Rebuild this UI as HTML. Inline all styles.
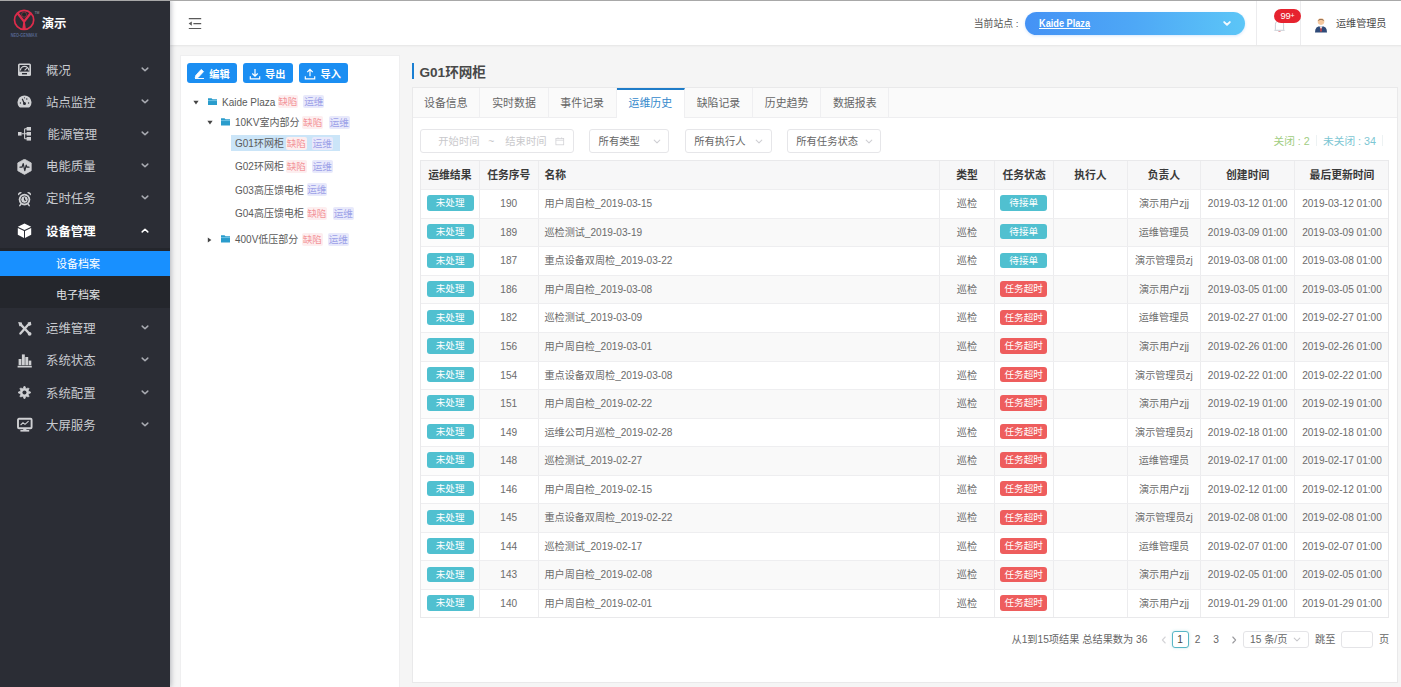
<!DOCTYPE html>
<html lang="zh-CN">
<head>
<meta charset="utf-8">
<title>演示</title>
<style>
*{box-sizing:border-box;margin:0;padding:0}
html,body{width:1401px;height:687px;overflow:hidden}
body{font-family:"Liberation Sans","Noto Sans CJK SC",sans-serif;font-size:12px;color:#555;background:#f5f5f5;position:relative}
.abs{position:absolute}
#side{position:absolute;left:0;top:0;width:169.8px;height:687px;background:#2b2d35;box-shadow:1px 0 5px rgba(0,10,30,.28);z-index:3}
#side .t{position:absolute;left:41.7px;top:13.9px;font-size:12.4px;font-weight:bold;color:#fff;line-height:20px}
.mi{position:absolute;left:0;width:169px;height:32px;line-height:32px;font-size:12.4px;color:#c8cacf}
.mi svg{position:absolute;left:17px;top:8px}
.mi .tx{position:absolute;left:46.4px;top:.7px;white-space:nowrap}
.mi .ar{position:absolute;left:140px;top:12px}
.mi.on{color:#fff;font-weight:bold}
#subbg{position:absolute;left:0;top:248px;width:169.8px;height:60px;background:#24262c}
.sub{position:absolute;left:0;width:169.8px;height:25px;line-height:25px;font-size:11px;color:#e2e3e6}
.sub .tx{position:absolute;left:56px;top:.6px;white-space:nowrap}
.sub.on{background:#1890ff;color:#fff}
#head{position:absolute;left:169.8px;top:1px;width:1232px;height:43.8px;background:#fff;box-shadow:0 1px 2px rgba(0,0,0,.07)}
#topline{position:absolute;left:0;top:0;width:1401px;height:1px;background:#a8a8a8;z-index:5}
#tree{position:absolute;left:180.3px;top:55.2px;width:219.3px;height:640px;background:#fff;border:1px solid #efeff0}
.btn{position:absolute;top:63.3px;height:20.2px;width:49.5px;background:#1b8ef2;border-radius:3px;color:#fff;font-size:10.2px;font-weight:bold;line-height:20px}
.btn span{position:absolute;left:22px;top:1.6px;white-space:nowrap}
.btn svg{position:absolute;left:7px;top:5px}
.tn{position:absolute;height:16px;line-height:17.4px;font-size:10px;color:#5a5a5a;white-space:nowrap}
.tn.hl{background:#cde6f7}
.tg{position:absolute;top:1.5px;height:13px;line-height:14px;font-size:9.6px;padding:0 .5px;border-radius:2px;white-space:nowrap}
.tg.r{color:#f3959a;background:#fdeeef}
.tg.b{color:#9da1e8;background:#e8e9fb}
.fd{position:absolute}
#title{position:absolute;left:411.7px;top:63px;height:15.6px;border-left:2.3px solid #1a7fd2;padding-left:5.8px;font-size:13.6px;font-weight:bold;color:#484848;line-height:19px;white-space:nowrap}
#box{position:absolute;left:412.2px;top:87.2px;width:985.4px;height:595.6px;background:#fff;border:1px solid #e9e9ea}
#tabs{position:absolute;left:0;top:0;width:983.4px;height:29.5px;background:#fafafa;border-bottom:1px solid #eeeef0}
.tab{position:absolute;top:0;height:29.5px;border-right:1px solid #efeff1;text-align:center;line-height:31px;font-size:10.9px;color:#666;white-space:nowrap}
.tab.on{background:#fff;color:#3489cc;border-top:2px solid #1f7cc8;line-height:26.6px;height:30px}
.inp{position:absolute;top:129.3px;height:24px;border:1px solid #e6e6e9;border-radius:3px;background:#fff;font-size:10.3px;line-height:22px;color:#666;white-space:nowrap}
.inp span{position:absolute;top:.5px}
.ph{color:#c9c9cc}
#tb{position:absolute;left:420px;top:159.8px;width:969px;height:458.4px;background:#fff;border:1px solid #e9e9eb}
.vl{position:absolute;top:0;width:1px;height:456.4px;background:#ececee}
.hl{position:absolute;left:0;width:967px;height:1px;background:#eeeef0}
#thbg{position:absolute;left:0;top:0;width:967px;height:28.4px;background:#f7f7f8}
.th{position:absolute;top:.6px;height:28.4px;line-height:28.4px;font-size:10.8px;font-weight:bold;color:#3a3a3a;text-align:center;white-space:nowrap}
.td{position:absolute;height:28.56px;line-height:28.56px;font-size:10.1px;color:#6c6c6c;text-align:center;white-space:nowrap}
.l{text-align:left;padding-left:5.6px}
.bd{position:absolute;height:15.5px;line-height:15.5px;border-radius:3px;color:#fff;font-size:9.6px;text-align:center;white-space:nowrap}
.bd.c{background:#50c0d0}
.bd.r{background:#ee5d5d}
#pg span{position:absolute;top:630.9px;height:18px;line-height:18px;font-size:10.2px;color:#666;white-space:nowrap}
</style>
</head>
<body>
<div id="side">
<svg class="abs" style="left:8px;top:6px" width="34" height="34" viewBox="0 0 34 34">
<circle cx="16.1" cy="13.9" r="9.6" fill="none" stroke="#dd2c4b" stroke-width="1.7"/>
<path d="M9.6 7.2 L16.1 15.6 L22.6 7.2" fill="none" stroke="#dd2c4b" stroke-width="2.3" stroke-linejoin="round"/>
<circle cx="16.1" cy="8.6" r="2.5" fill="#1d2a2a" stroke="#dd2c4b" stroke-width=".5"/>
<path d="M14.3 23 L15.5 14.6 H16.7 L17.9 23Z" fill="#dd2c4b"/>
<text x="26.4" y="7.6" font-size="3.4" fill="#9a9ca3">TM</text>
<text x="2.8" y="30.8" font-size="4.6" font-weight="bold" fill="#55658f" textLength="26.4" lengthAdjust="spacingAndGlyphs">NEO-GENMAX</text>
</svg>
<div class="t">演示</div>
<div class="mi" style="top:54px"><svg width="16" height="16" viewBox="0 0 16 16"><rect x="1" y="1.5" width="13" height="12.5" rx="1.5" fill="#cfd0d3"/><rect x="2.6" y="3" width="9.8" height="6.6" fill="#2b2d35"/><path d="M3.4 8.6 A4.2 4.2 0 0 1 11.8 8.6" fill="none" stroke="#cfd0d3" stroke-width="1.3"/><path d="M7.6 8.4 L10.4 5.6" stroke="#cfd0d3" stroke-width="1.1"/><rect x="5" y="11" width="5" height="1.4" fill="#2b2d35"/></svg><span class="tx" style="left:46px">概况</span><svg class="abs" style="left:140.5px;top:11.6px" width="8" height="7" viewBox="0 0 8 7"><path d="M1.2 2.1 L4 4.8 L6.8 2.1" fill="none" stroke="#a9abb2" stroke-width="1.5" stroke-linecap="round" stroke-linejoin="round"/></svg></div>
<div class="mi" style="top:86.2px"><svg width="16" height="16" viewBox="0 0 16 16"><path d="M2.2 13 A7 7 0 1 1 12.8 13 Q12.4 13.4 11.8 13.4 H3.2 Q2.6 13.4 2.2 13Z" fill="#cfd0d3"/><circle cx="7.5" cy="9.6" r="1.5" fill="#2b2d35"/><path d="M7.3 9.4 L5.4 5.2" stroke="#2b2d35" stroke-width="1.2" stroke-linecap="round"/><circle cx="3.4" cy="9" r=".7" fill="#2b2d35"/><circle cx="11.6" cy="9" r=".7" fill="#2b2d35"/><circle cx="9.8" cy="5" r=".7" fill="#2b2d35"/><circle cx="7.5" cy="3.8" r=".6" fill="#2b2d35"/></svg><span class="tx" style="left:46px">站点监控</span><svg class="abs" style="left:140.5px;top:11.6px" width="8" height="7" viewBox="0 0 8 7"><path d="M1.2 2.1 L4 4.8 L6.8 2.1" fill="none" stroke="#a9abb2" stroke-width="1.5" stroke-linecap="round" stroke-linejoin="round"/></svg></div>
<div class="mi" style="top:118.4px"><svg width="16" height="16" viewBox="0 0 16 16"><rect x="1" y="6" width="3.6" height="3.6" fill="#cfd0d3"/><path d="M4.6 7.8 H7.6 M7.6 2.8 V12.8 M7.6 2.8 H10 M7.6 7.8 H10 M7.6 12.8 H10" stroke="#cfd0d3" stroke-width="1.1" fill="none"/><rect x="9.6" y="1" width="4.4" height="3.6" fill="#cfd0d3"/><rect x="9.6" y="6" width="4.4" height="3.6" fill="#cfd0d3"/><rect x="9.6" y="11" width="4.4" height="3.6" fill="#cfd0d3"/></svg><span class="tx" style="left:47.5px">能源管理</span><svg class="abs" style="left:140.5px;top:11.6px" width="8" height="7" viewBox="0 0 8 7"><path d="M1.2 2.1 L4 4.8 L6.8 2.1" fill="none" stroke="#a9abb2" stroke-width="1.5" stroke-linecap="round" stroke-linejoin="round"/></svg></div>
<div class="mi" style="top:150.6px"><svg width="16" height="16" viewBox="0 0 16 16"><path d="M7.5 .2 L14.2 3.9 V11.7 L7.5 15.4 L.8 11.7 V3.9Z" fill="#cfd0d3" stroke="#cfd0d3" stroke-width=".8" stroke-linejoin="round"/><path d="M3 8.2 H5 L6.2 4.6 L7.8 11.6 L9.2 6.2 L10 8.2 H12" fill="none" stroke="#2b2d35" stroke-width="1.2" stroke-linejoin="round" stroke-linecap="round"/></svg><span class="tx" style="left:46px">电能质量</span><svg class="abs" style="left:140.5px;top:11.6px" width="8" height="7" viewBox="0 0 8 7"><path d="M1.2 2.1 L4 4.8 L6.8 2.1" fill="none" stroke="#a9abb2" stroke-width="1.5" stroke-linecap="round" stroke-linejoin="round"/></svg></div>
<div class="mi" style="top:182.8px"><svg width="16" height="16" viewBox="0 0 16 16"><circle cx="7.5" cy="8.6" r="5.8" fill="#cfd0d3"/><circle cx="7.5" cy="8.6" r="3.7" fill="none" stroke="#2b2d35" stroke-width=".8"/><path d="M7.5 6.6 V8.8 L9 9.6" stroke="#2b2d35" stroke-width="1.1" fill="none"/><path d="M1 4.4 A2.6 2.6 0 0 1 5 1.6Z" fill="#cfd0d3"/><path d="M14 4.4 A2.6 2.6 0 0 0 10 1.6Z" fill="#cfd0d3"/><path d="M3.8 13.2 L2.8 14.6 M11.2 13.2 L12.2 14.6" stroke="#cfd0d3" stroke-width="1.5" stroke-linecap="round"/></svg><span class="tx" style="left:46px">定时任务</span><svg class="abs" style="left:140.5px;top:11.6px" width="8" height="7" viewBox="0 0 8 7"><path d="M1.2 2.1 L4 4.8 L6.8 2.1" fill="none" stroke="#a9abb2" stroke-width="1.5" stroke-linecap="round" stroke-linejoin="round"/></svg></div>
<div class="mi on" style="top:215px"><svg width="16" height="16" viewBox="0 0 16 16"><path d="M7.5 .6 L14.2 3.8 L7.5 7 L.8 3.8Z" fill="#fff"/><path d="M.8 5 L7 8 V15 L.8 11.8Z" fill="#fff"/><path d="M14.2 5 L8 8 V15 L14.2 11.8Z" fill="#fff"/></svg><span class="tx" style="left:46px">设备管理</span><svg class="abs" style="left:140.5px;top:11.6px" width="8" height="7" viewBox="0 0 8 7"><path d="M1.2 4.9 L4 2.2 L6.8 4.9" fill="none" stroke="#fff" stroke-width="1.5" stroke-linecap="round" stroke-linejoin="round"/></svg></div>
<div id="subbg"></div>
<div class="sub on" style="top:251.3px"><span class="tx">设备档案</span></div>
<div class="sub" style="top:282.3px"><span class="tx">电子档案</span></div>
<div class="mi" style="top:312.6px"><svg width="16" height="16" viewBox="0 0 16 16"><path d="M3.6 3.4 L12.4 12.6" stroke="#cfd0d3" stroke-width="2.3" stroke-linecap="round"/><path d="M11.6 3.2 L3.4 12.6" stroke="#cfd0d3" stroke-width="2.3" stroke-linecap="round"/><path d="M1.2 1 L4.8 1.6 L5.4 5 L2.4 5.2Z" fill="#cfd0d3"/><path d="M10.6 1.4 L13.8 .8 L14.4 4 L12 5Z" fill="#cfd0d3"/><circle cx="12.6" cy="12.8" r="1.9" fill="#cfd0d3"/></svg><span class="tx" style="left:46px">运维管理</span><svg class="abs" style="left:140.5px;top:11.6px" width="8" height="7" viewBox="0 0 8 7"><path d="M1.2 2.1 L4 4.8 L6.8 2.1" fill="none" stroke="#a9abb2" stroke-width="1.5" stroke-linecap="round" stroke-linejoin="round"/></svg></div>
<div class="mi" style="top:344.8px"><svg width="16" height="16" viewBox="0 0 16 16"><rect x=".6" y="12.8" width="14.2" height="1.7" fill="#cfd0d3"/><rect x="1.6" y="6" width="2.8" height="6.2" fill="#cfd0d3"/><rect x="4.9" y="1.4" width="2.9" height="10.8" fill="#cfd0d3"/><rect x="8.3" y="4" width="2.9" height="8.2" fill="#cfd0d3"/><rect x="11.7" y="7.6" width="2.6" height="4.6" fill="#cfd0d3"/></svg><span class="tx" style="left:46px">系统状态</span><svg class="abs" style="left:140.5px;top:11.6px" width="8" height="7" viewBox="0 0 8 7"><path d="M1.2 2.1 L4 4.8 L6.8 2.1" fill="none" stroke="#a9abb2" stroke-width="1.5" stroke-linecap="round" stroke-linejoin="round"/></svg></div>
<div class="mi" style="top:377px"><svg width="16" height="16" viewBox="0 0 16 16"><g transform="translate(1.1,1.1) scale(.85)"><path d="M7.5 1 L8.7 1 L9.2 2.9 L10.7 3.6 L12.4 2.6 L13.4 3.6 L12.4 5.3 L13 6.8 L15 7.3 L15 8.7 L13 9.2 L12.4 10.7 L13.4 12.4 L12.4 13.4 L10.7 12.4 L9.2 13.1 L8.7 15 L7.3 15 L6.8 13.1 L5.3 12.4 L3.6 13.4 L2.6 12.4 L3.6 10.7 L3 9.2 L1 8.7 L1 7.3 L3 6.8 L3.6 5.3 L2.6 3.6 L3.6 2.6 L5.3 3.6 L6.8 2.9 L7.3 1Z" fill="#cfd0d3" stroke="#cfd0d3" stroke-width=".9" stroke-linejoin="round" transform="translate(-.5,-.5)"/><circle cx="7.5" cy="7.5" r="2.4" fill="#2b2d35"/></g></svg><span class="tx" style="left:46px">系统配置</span><svg class="abs" style="left:140.5px;top:11.6px" width="8" height="7" viewBox="0 0 8 7"><path d="M1.2 2.1 L4 4.8 L6.8 2.1" fill="none" stroke="#a9abb2" stroke-width="1.5" stroke-linecap="round" stroke-linejoin="round"/></svg></div>
<div class="mi" style="top:409.2px"><svg width="16" height="16" viewBox="0 0 16 16"><rect x="1" y="1.8" width="13.6" height="9.4" rx="1" fill="none" stroke="#cfd0d3" stroke-width="1.9"/><path d="M3.6 8 L6 5.8 L8 7.4 L11.6 4.2" fill="none" stroke="#cfd0d3" stroke-width="1.1"/><rect x="6.2" y="11.6" width="3.2" height="1.6" fill="#cfd0d3"/><rect x="3.4" y="13" width="8.8" height="1.6" fill="#cfd0d3"/></svg><span class="tx" style="left:46px">大屏服务</span><svg class="abs" style="left:140.5px;top:11.6px" width="8" height="7" viewBox="0 0 8 7"><path d="M1.2 2.1 L4 4.8 L6.8 2.1" fill="none" stroke="#a9abb2" stroke-width="1.5" stroke-linecap="round" stroke-linejoin="round"/></svg></div>
</div>
<div id="head"></div>
<div id="topline"></div>
<svg class="abs" style="left:188px;top:17px" width="14" height="13" viewBox="0 0 14 13"><path d="M.8 1.6 H13.2 M5.4 6.6 H13.2 M.8 11.5 H13.2" stroke="#5a5a5a" stroke-width="1.2" fill="none"/><path d="M.6 6.6 L3.8 4.4 V8.8Z" fill="#5a5a5a"/></svg>
<div class="abs" style="left:973.8px;top:14.7px;height:18px;line-height:18px;font-size:9.8px;color:#555;white-space:nowrap">当前站点 :</div>
<div class="abs" style="left:1025px;top:12px;width:220px;height:23px;border-radius:11.5px;background:linear-gradient(90deg,#4492f5 0%,#4ea8f6 50%,#5cc6f7 100%);box-shadow:0 1px 3px rgba(60,140,240,.22)"></div>
<div class="abs" style="left:1039.2px;top:14.2px;height:18px;line-height:18px;font-weight:bold;font-size:11px;color:#fff;text-decoration:underline;white-space:nowrap;transform-origin:0 50%;transform:scaleX(.835)">Kaide Plaza</div>
<svg class="abs" style="left:1222.6px;top:19.6px" width="8" height="7" viewBox="0 0 8 7"><path d="M1.2 2.1 L4 4.8 L6.8 2.1" fill="none" stroke="#f2faff" stroke-width="1.9" stroke-linecap="round" stroke-linejoin="round"/></svg>
<div class="abs" style="left:1256px;top:1px;width:1px;height:44px;background:#ececee"></div>
<div class="abs" style="left:1300px;top:1px;width:1px;height:44px;background:#ececee"></div>
<svg class="abs" style="left:1272.6px;top:19.4px" width="13" height="14" viewBox="0 0 13 14"><path d="M2.4 10.4 V5.8 A4.1 4.1 0 0 1 10.6 5.8 V10.4 L11.4 11.3 H1.6Z" fill="none" stroke="#c3c9d1" stroke-width=".9"/><path d="M5.4 12.5 H7.6" stroke="#e6a3a8" stroke-width="1"/></svg>
<div class="abs" style="left:1274px;top:8.9px;width:26.7px;height:14.4px;border-radius:7.2px;background:#e6232f;color:#fff;font-size:9.4px;line-height:14.6px;text-align:center;letter-spacing:-.2px">99<span style="font-size:7px;position:relative;top:-.5px">+</span></div>
<svg class="abs" style="left:1314px;top:17px" width="14" height="16" viewBox="0 0 14 16"><circle cx="7" cy="4.6" r="3.3" fill="#f6c9a0"/><path d="M3.6 3.8 Q7 .2 10.4 3.8 Q8.6 3.4 7 2.6 Q5.4 3.4 3.6 3.8Z" fill="#5a3a22"/><path d="M1 15.4 Q1 9 7 9 Q13 9 13 15.4Z" fill="#2f4a78"/><path d="M5.4 9.2 L7 12.4 L8.6 9.2Z" fill="#fff"/><path d="M6.6 10.4 H7.4 L7.8 14 L7 15 L6.2 14Z" fill="#e04040"/></svg>
<div class="abs" style="left:1336px;top:14.5px;height:18px;line-height:18px;font-size:10.1px;color:#4a4a4a;white-space:nowrap">运维管理员</div>
<div id="tree"></div>
<div class="btn" style="left:187.3px"><svg width="11" height="11" viewBox="0 0 11 11"><path d="M1.8 7.4 L7.2 1.4 L9.6 3.6 L4.2 9.4 L1.2 10Z" fill="#fff" stroke="#fff" stroke-width=".8" stroke-linejoin="round"/><path d="M1 10.6 H10" stroke="#fff" stroke-width="1.1"/></svg><span>编辑</span></div>
<div class="btn" style="left:243px"><svg style="left:5.8px;top:4.6px" width="12" height="12" viewBox="0 0 11 11"><path d="M5.5 1 V7.2 M3 5 L5.5 7.4 L8 5 M1.2 7.6 V10 H9.8 V7.6" fill="none" stroke="#fff" stroke-width="1.1"/></svg><span>导出</span></div>
<div class="btn" style="left:298.6px"><svg style="left:5.8px;top:4.6px" width="12" height="12" viewBox="0 0 11 11"><path d="M5.5 7.6 V1.4 M3 3.8 L5.5 1.2 L8 3.8 M1.2 7.6 V10 H9.8 V7.6" fill="none" stroke="#fff" stroke-width="1.1"/></svg><span>导入</span></div>
<svg class="abs" style="left:193px;top:99.5px" width="6" height="5" viewBox="0 0 6 5"><path d="M.4 .8 H5.6 L3 4.4Z" fill="#444"/></svg>
<svg class="fd" style="left:207.8px;top:97.6px" width="9.4" height="7.6" viewBox="0 0 10 8"><path d="M0 .3 H3.8 L4.8 1.3 H10 V8 H0Z" fill="#2a9ccc"/><path d="M0 2.7 H10" stroke="#8fd6f2" stroke-width=".7"/></svg>
<div class="tn" style="left:222px;top:93.6px">Kaide Plaza</div><div class="tg r" style="left:277.5px;top:95.1px;width:20.5px;text-align:center">缺陷</div><div class="tg b" style="left:303.4px;top:95.1px;width:20.8px;text-align:center">运维</div>
<svg class="abs" style="left:206.5px;top:120px" width="6" height="5" viewBox="0 0 6 5"><path d="M.4 .8 H5.6 L3 4.4Z" fill="#444"/></svg>
<svg class="fd" style="left:221px;top:118px" width="9.4" height="7.6" viewBox="0 0 10 8"><path d="M0 .3 H3.8 L4.8 1.3 H10 V8 H0Z" fill="#2a9ccc"/><path d="M0 2.7 H10" stroke="#8fd6f2" stroke-width=".7"/></svg>
<div class="tn" style="left:235px;top:114.2px">10KV室内部分</div><div class="tg r" style="left:302.4px;top:115.7px;width:20.6px;text-align:center">缺陷</div><div class="tg b" style="left:329px;top:115.7px;width:20.5px;text-align:center">运维</div>
<div class="abs" style="left:231px;top:134.8px;width:109px;height:16.7px;background:#cbe5f8"></div><div class="tn" style="left:235px;top:135.2px">G01环网柜</div><div class="tg r" style="left:286px;top:136.7px;width:20.5px;text-align:center">缺陷</div><div class="tg b" style="left:312px;top:136.7px;width:20.5px;text-align:center">运维</div>
<div class="tn" style="left:235px;top:158.1px">G02环网柜</div><div class="tg r" style="left:286px;top:159.6px;width:20.5px;text-align:center">缺陷</div><div class="tg b" style="left:312px;top:159.6px;width:20.5px;text-align:center">运维</div>
<div class="tn" style="left:235px;top:181.5px">G03高压馈电柜</div><div class="tg b" style="left:306.5px;top:183px;width:20.5px;text-align:center">运维</div>
<div class="tn" style="left:235px;top:205px">G04高压馈电柜</div><div class="tg r" style="left:306.5px;top:206.5px;width:20.5px;text-align:center">缺陷</div><div class="tg b" style="left:333px;top:206.5px;width:20.5px;text-align:center">运维</div>
<svg class="abs" style="left:207px;top:236.5px" width="5" height="6" viewBox="0 0 5 6"><path d="M.8 .4 V5.6 L4.4 3Z" fill="#444"/></svg>
<svg class="fd" style="left:221px;top:235px" width="9.4" height="7.6" viewBox="0 0 10 8"><path d="M0 .3 H3.8 L4.8 1.3 H10 V8 H0Z" fill="#2a9ccc"/><path d="M0 2.7 H10" stroke="#8fd6f2" stroke-width=".7"/></svg>
<div class="tn" style="left:235px;top:231.3px">400V低压部分</div><div class="tg r" style="left:302px;top:232.8px;width:20.5px;text-align:center">缺陷</div><div class="tg b" style="left:328px;top:232.8px;width:20.5px;text-align:center">运维</div>
<div id="title">G01环网柜</div>
<div id="box"><div id="tabs">
<div class="tab" style="left:-0.9px;width:68.15px">设备信息</div>
<div class="tab" style="left:67.25px;width:68.15px">实时数据</div>
<div class="tab" style="left:135.4px;width:68.15px">事件记录</div>
<div class="tab on" style="left:203.55px;width:68.15px">运维历史</div>
<div class="tab" style="left:271.7px;width:68.15px">缺陷记录</div>
<div class="tab" style="left:339.85px;width:68.15px">历史趋势</div>
<div class="tab" style="left:408px;width:68.15px">数据报表</div>
</div></div>
<div class="inp" style="left:420.3px;width:153.5px"><span class="ph" style="left:17px">开始时间</span><span class="ph" style="left:67px">~</span><span class="ph" style="left:84px">结束时间</span><svg class="abs" style="left:133.6px;top:6.6px" width="10" height="9" viewBox="0 0 10 9"><rect x=".9" y="1.4" width="7.8" height="6.4" fill="none" stroke="#d2d2d6" stroke-width=".8"/><path d="M.9 3.2 H8.7 M3 .4 V2 M6.6 .4 V2" stroke="#d2d2d6" stroke-width=".8"/></svg></div>
<div class="inp" style="left:589px;width:80.2px"><span style="left:8.6px">所有类型</span><svg class="abs" style="left:62.9px;top:8px" width="8" height="7" viewBox="0 0 8 7"><path d="M1.2 2.1 L4 4.8 L6.8 2.1" fill="none" stroke="#cfcfd3" stroke-width="1.1" stroke-linecap="round" stroke-linejoin="round"/></svg></div>
<div class="inp" style="left:684.6px;width:87px"><span style="left:8.6px">所有执行人</span><svg class="abs" style="left:69.7px;top:8px" width="8" height="7" viewBox="0 0 8 7"><path d="M1.2 2.1 L4 4.8 L6.8 2.1" fill="none" stroke="#cfcfd3" stroke-width="1.1" stroke-linecap="round" stroke-linejoin="round"/></svg></div>
<div class="inp" style="left:786.7px;width:94.7px"><span style="left:8.6px">所有任务状态</span><svg class="abs" style="left:77.4px;top:8px" width="8" height="7" viewBox="0 0 8 7"><path d="M1.2 2.1 L4 4.8 L6.8 2.1" fill="none" stroke="#cfcfd3" stroke-width="1.1" stroke-linecap="round" stroke-linejoin="round"/></svg></div>
<div class="abs" style="left:1273.5px;top:132px;height:18px;line-height:18px;font-size:10.7px;white-space:nowrap;color:#9fcd82">关闭 : 2</div>
<div class="abs" style="left:1316px;top:135px;width:1px;height:11px;background:#edf2f3"></div>
<div class="abs" style="left:1323px;top:132px;height:18px;line-height:18px;font-size:10.7px;white-space:nowrap;color:#7cc6d3">未关闭 : 34</div>
<div class="abs" style="left:1381.5px;top:135px;width:1px;height:11px;background:#edf2f3"></div>
<div id="tb"><div id="thbg"></div>
<div class="abs" style="left:0;top:57.96px;width:57.7px;height:27.56px;background:#fcfcfc"></div>
<div class="abs" style="left:57.7px;top:57.96px;width:909.3px;height:27.56px;background:#f9f9f9"></div>
<div class="abs" style="left:0;top:115.08px;width:57.7px;height:27.56px;background:#fcfcfc"></div>
<div class="abs" style="left:57.7px;top:115.08px;width:909.3px;height:27.56px;background:#f9f9f9"></div>
<div class="abs" style="left:0;top:172.2px;width:57.7px;height:27.56px;background:#fcfcfc"></div>
<div class="abs" style="left:57.7px;top:172.2px;width:909.3px;height:27.56px;background:#f9f9f9"></div>
<div class="abs" style="left:0;top:229.32px;width:57.7px;height:27.56px;background:#fcfcfc"></div>
<div class="abs" style="left:57.7px;top:229.32px;width:909.3px;height:27.56px;background:#f9f9f9"></div>
<div class="abs" style="left:0;top:286.44px;width:57.7px;height:27.56px;background:#fcfcfc"></div>
<div class="abs" style="left:57.7px;top:286.44px;width:909.3px;height:27.56px;background:#f9f9f9"></div>
<div class="abs" style="left:0;top:343.56px;width:57.7px;height:27.56px;background:#fcfcfc"></div>
<div class="abs" style="left:57.7px;top:343.56px;width:909.3px;height:27.56px;background:#f9f9f9"></div>
<div class="abs" style="left:0;top:400.68px;width:57.7px;height:27.56px;background:#fcfcfc"></div>
<div class="abs" style="left:57.7px;top:400.68px;width:909.3px;height:27.56px;background:#f9f9f9"></div>
<div class="vl" style="left:57.7px"></div>
<div class="vl" style="left:116.9px"></div>
<div class="vl" style="left:517.9px"></div>
<div class="vl" style="left:573px"></div>
<div class="vl" style="left:632.2px"></div>
<div class="vl" style="left:705.8px"></div>
<div class="vl" style="left:779.1px"></div>
<div class="vl" style="left:873.2px"></div>
<div class="hl" style="top:28.4px"></div>
<div class="hl" style="top:56.96px"></div>
<div class="hl" style="top:85.52px"></div>
<div class="hl" style="top:114.08px"></div>
<div class="hl" style="top:142.64px"></div>
<div class="hl" style="top:171.2px"></div>
<div class="hl" style="top:199.76px"></div>
<div class="hl" style="top:228.32px"></div>
<div class="hl" style="top:256.88px"></div>
<div class="hl" style="top:285.44px"></div>
<div class="hl" style="top:314px"></div>
<div class="hl" style="top:342.56px"></div>
<div class="hl" style="top:371.12px"></div>
<div class="hl" style="top:399.68px"></div>
<div class="hl" style="top:428.24px"></div>
<div class="th" style="left:0px;width:57.7px">运维结果</div>
<div class="th" style="left:58.7px;width:58.2px">任务序号</div>
<div class="th l" style="left:117.9px;width:400px">名称</div>
<div class="th" style="left:518.9px;width:54.1px">类型</div>
<div class="th" style="left:574px;width:58.2px">任务状态</div>
<div class="th" style="left:633.2px;width:72.6px">执行人</div>
<div class="th" style="left:706.8px;width:72.3px">负责人</div>
<div class="th" style="left:780.1px;width:93.1px">创建时间</div>
<div class="th" style="left:874.2px;width:93.6px">最后更新时间</div>
<div class="bd c" style="left:5.6px;top:34.6px;width:47px">未处理</div>
<div class="td" style="left:58.7px;top:29.4px;width:58.2px">190</div>
<div class="td l" style="left:117.9px;top:29.4px;width:400px">用户周自检_2019-03-15</div>
<div class="td" style="left:518.9px;top:29.4px;width:54.1px">巡检</div>
<div class="bd c" style="left:579.2px;top:34.6px;width:47px">待接单</div>
<div class="td" style="left:706.8px;top:29.4px;width:72.3px">演示用户zjj</div>
<div class="td" style="left:780.1px;top:29.4px;width:93.1px">2019-03-12 01:00</div>
<div class="td" style="left:874.2px;top:29.4px;width:93.6px">2019-03-12 01:00</div>
<div class="bd c" style="left:5.6px;top:63.16px;width:47px">未处理</div>
<div class="td" style="left:58.7px;top:57.96px;width:58.2px">189</div>
<div class="td l" style="left:117.9px;top:57.96px;width:400px">巡检测试_2019-03-19</div>
<div class="td" style="left:518.9px;top:57.96px;width:54.1px">巡检</div>
<div class="bd c" style="left:579.2px;top:63.16px;width:47px">待接单</div>
<div class="td" style="left:706.8px;top:57.96px;width:72.3px">运维管理员</div>
<div class="td" style="left:780.1px;top:57.96px;width:93.1px">2019-03-09 01:00</div>
<div class="td" style="left:874.2px;top:57.96px;width:93.6px">2019-03-09 01:00</div>
<div class="bd c" style="left:5.6px;top:91.72px;width:47px">未处理</div>
<div class="td" style="left:58.7px;top:86.52px;width:58.2px">187</div>
<div class="td l" style="left:117.9px;top:86.52px;width:400px">重点设备双周检_2019-03-22</div>
<div class="td" style="left:518.9px;top:86.52px;width:54.1px">巡检</div>
<div class="bd c" style="left:579.2px;top:91.72px;width:47px">待接单</div>
<div class="td" style="left:706.8px;top:86.52px;width:72.3px">演示管理员zj</div>
<div class="td" style="left:780.1px;top:86.52px;width:93.1px">2019-03-08 01:00</div>
<div class="td" style="left:874.2px;top:86.52px;width:93.6px">2019-03-08 01:00</div>
<div class="bd c" style="left:5.6px;top:120.28px;width:47px">未处理</div>
<div class="td" style="left:58.7px;top:115.08px;width:58.2px">186</div>
<div class="td l" style="left:117.9px;top:115.08px;width:400px">用户周自检_2019-03-08</div>
<div class="td" style="left:518.9px;top:115.08px;width:54.1px">巡检</div>
<div class="bd r" style="left:579.2px;top:120.28px;width:47px">任务超时</div>
<div class="td" style="left:706.8px;top:115.08px;width:72.3px">演示用户zjj</div>
<div class="td" style="left:780.1px;top:115.08px;width:93.1px">2019-03-05 01:00</div>
<div class="td" style="left:874.2px;top:115.08px;width:93.6px">2019-03-05 01:00</div>
<div class="bd c" style="left:5.6px;top:148.84px;width:47px">未处理</div>
<div class="td" style="left:58.7px;top:143.64px;width:58.2px">182</div>
<div class="td l" style="left:117.9px;top:143.64px;width:400px">巡检测试_2019-03-09</div>
<div class="td" style="left:518.9px;top:143.64px;width:54.1px">巡检</div>
<div class="bd r" style="left:579.2px;top:148.84px;width:47px">任务超时</div>
<div class="td" style="left:706.8px;top:143.64px;width:72.3px">运维管理员</div>
<div class="td" style="left:780.1px;top:143.64px;width:93.1px">2019-02-27 01:00</div>
<div class="td" style="left:874.2px;top:143.64px;width:93.6px">2019-02-27 01:00</div>
<div class="bd c" style="left:5.6px;top:177.4px;width:47px">未处理</div>
<div class="td" style="left:58.7px;top:172.2px;width:58.2px">156</div>
<div class="td l" style="left:117.9px;top:172.2px;width:400px">用户周自检_2019-03-01</div>
<div class="td" style="left:518.9px;top:172.2px;width:54.1px">巡检</div>
<div class="bd r" style="left:579.2px;top:177.4px;width:47px">任务超时</div>
<div class="td" style="left:706.8px;top:172.2px;width:72.3px">演示用户zjj</div>
<div class="td" style="left:780.1px;top:172.2px;width:93.1px">2019-02-26 01:00</div>
<div class="td" style="left:874.2px;top:172.2px;width:93.6px">2019-02-26 01:00</div>
<div class="bd c" style="left:5.6px;top:205.96px;width:47px">未处理</div>
<div class="td" style="left:58.7px;top:200.76px;width:58.2px">154</div>
<div class="td l" style="left:117.9px;top:200.76px;width:400px">重点设备双周检_2019-03-08</div>
<div class="td" style="left:518.9px;top:200.76px;width:54.1px">巡检</div>
<div class="bd r" style="left:579.2px;top:205.96px;width:47px">任务超时</div>
<div class="td" style="left:706.8px;top:200.76px;width:72.3px">演示管理员zj</div>
<div class="td" style="left:780.1px;top:200.76px;width:93.1px">2019-02-22 01:00</div>
<div class="td" style="left:874.2px;top:200.76px;width:93.6px">2019-02-22 01:00</div>
<div class="bd c" style="left:5.6px;top:234.52px;width:47px">未处理</div>
<div class="td" style="left:58.7px;top:229.32px;width:58.2px">151</div>
<div class="td l" style="left:117.9px;top:229.32px;width:400px">用户周自检_2019-02-22</div>
<div class="td" style="left:518.9px;top:229.32px;width:54.1px">巡检</div>
<div class="bd r" style="left:579.2px;top:234.52px;width:47px">任务超时</div>
<div class="td" style="left:706.8px;top:229.32px;width:72.3px">演示用户zjj</div>
<div class="td" style="left:780.1px;top:229.32px;width:93.1px">2019-02-19 01:00</div>
<div class="td" style="left:874.2px;top:229.32px;width:93.6px">2019-02-19 01:00</div>
<div class="bd c" style="left:5.6px;top:263.08px;width:47px">未处理</div>
<div class="td" style="left:58.7px;top:257.88px;width:58.2px">149</div>
<div class="td l" style="left:117.9px;top:257.88px;width:400px">运维公司月巡检_2019-02-28</div>
<div class="td" style="left:518.9px;top:257.88px;width:54.1px">巡检</div>
<div class="bd r" style="left:579.2px;top:263.08px;width:47px">任务超时</div>
<div class="td" style="left:706.8px;top:257.88px;width:72.3px">演示管理员zj</div>
<div class="td" style="left:780.1px;top:257.88px;width:93.1px">2019-02-18 01:00</div>
<div class="td" style="left:874.2px;top:257.88px;width:93.6px">2019-02-18 01:00</div>
<div class="bd c" style="left:5.6px;top:291.64px;width:47px">未处理</div>
<div class="td" style="left:58.7px;top:286.44px;width:58.2px">148</div>
<div class="td l" style="left:117.9px;top:286.44px;width:400px">巡检测试_2019-02-27</div>
<div class="td" style="left:518.9px;top:286.44px;width:54.1px">巡检</div>
<div class="bd r" style="left:579.2px;top:291.64px;width:47px">任务超时</div>
<div class="td" style="left:706.8px;top:286.44px;width:72.3px">运维管理员</div>
<div class="td" style="left:780.1px;top:286.44px;width:93.1px">2019-02-17 01:00</div>
<div class="td" style="left:874.2px;top:286.44px;width:93.6px">2019-02-17 01:00</div>
<div class="bd c" style="left:5.6px;top:320.2px;width:47px">未处理</div>
<div class="td" style="left:58.7px;top:315px;width:58.2px">146</div>
<div class="td l" style="left:117.9px;top:315px;width:400px">用户周自检_2019-02-15</div>
<div class="td" style="left:518.9px;top:315px;width:54.1px">巡检</div>
<div class="bd r" style="left:579.2px;top:320.2px;width:47px">任务超时</div>
<div class="td" style="left:706.8px;top:315px;width:72.3px">演示用户zjj</div>
<div class="td" style="left:780.1px;top:315px;width:93.1px">2019-02-12 01:00</div>
<div class="td" style="left:874.2px;top:315px;width:93.6px">2019-02-12 01:00</div>
<div class="bd c" style="left:5.6px;top:348.76px;width:47px">未处理</div>
<div class="td" style="left:58.7px;top:343.56px;width:58.2px">145</div>
<div class="td l" style="left:117.9px;top:343.56px;width:400px">重点设备双周检_2019-02-22</div>
<div class="td" style="left:518.9px;top:343.56px;width:54.1px">巡检</div>
<div class="bd r" style="left:579.2px;top:348.76px;width:47px">任务超时</div>
<div class="td" style="left:706.8px;top:343.56px;width:72.3px">演示管理员zj</div>
<div class="td" style="left:780.1px;top:343.56px;width:93.1px">2019-02-08 01:00</div>
<div class="td" style="left:874.2px;top:343.56px;width:93.6px">2019-02-08 01:00</div>
<div class="bd c" style="left:5.6px;top:377.32px;width:47px">未处理</div>
<div class="td" style="left:58.7px;top:372.12px;width:58.2px">144</div>
<div class="td l" style="left:117.9px;top:372.12px;width:400px">巡检测试_2019-02-17</div>
<div class="td" style="left:518.9px;top:372.12px;width:54.1px">巡检</div>
<div class="bd r" style="left:579.2px;top:377.32px;width:47px">任务超时</div>
<div class="td" style="left:706.8px;top:372.12px;width:72.3px">运维管理员</div>
<div class="td" style="left:780.1px;top:372.12px;width:93.1px">2019-02-07 01:00</div>
<div class="td" style="left:874.2px;top:372.12px;width:93.6px">2019-02-07 01:00</div>
<div class="bd c" style="left:5.6px;top:405.88px;width:47px">未处理</div>
<div class="td" style="left:58.7px;top:400.68px;width:58.2px">143</div>
<div class="td l" style="left:117.9px;top:400.68px;width:400px">用户周自检_2019-02-08</div>
<div class="td" style="left:518.9px;top:400.68px;width:54.1px">巡检</div>
<div class="bd r" style="left:579.2px;top:405.88px;width:47px">任务超时</div>
<div class="td" style="left:706.8px;top:400.68px;width:72.3px">演示用户zjj</div>
<div class="td" style="left:780.1px;top:400.68px;width:93.1px">2019-02-05 01:00</div>
<div class="td" style="left:874.2px;top:400.68px;width:93.6px">2019-02-05 01:00</div>
<div class="bd c" style="left:5.6px;top:434.44px;width:47px">未处理</div>
<div class="td" style="left:58.7px;top:429.24px;width:58.2px">140</div>
<div class="td l" style="left:117.9px;top:429.24px;width:400px">用户周自检_2019-02-01</div>
<div class="td" style="left:518.9px;top:429.24px;width:54.1px">巡检</div>
<div class="bd r" style="left:579.2px;top:434.44px;width:47px">任务超时</div>
<div class="td" style="left:706.8px;top:429.24px;width:72.3px">演示用户zjj</div>
<div class="td" style="left:780.1px;top:429.24px;width:93.1px">2019-01-29 01:00</div>
<div class="td" style="left:874.2px;top:429.24px;width:93.6px">2019-01-29 01:00</div>
</div>
<div id="pg">
<span style="left:1011.5px">从1到15项结果 总结果数为 36</span>
<svg class="abs" style="left:1159.5px;top:635.6px" width="8" height="8" viewBox="0 0 8 8"><path d="M5.2 1 L2.4 4 L5.2 7" fill="none" stroke="#d4d4d8" stroke-width="1.1" stroke-linecap="round" stroke-linejoin="round"/></svg>
<div class="abs" style="left:1171.5px;top:630.7px;width:17.2px;height:17px;border:1px solid #57b6c6;border-radius:3px;background:#fff;box-shadow:0 0 3px rgba(87,182,198,.35)"></div>
<span style="left:1171.5px;width:17.2px;text-align:center;color:#444">1</span>
<span style="left:1189px;width:17.2px;text-align:center">2</span>
<span style="left:1207.5px;width:17.2px;text-align:center">3</span>
<svg class="abs" style="left:1229.5px;top:635.6px" width="8" height="8" viewBox="0 0 8 8"><path d="M2.8 1 L5.6 4 L2.8 7" fill="none" stroke="#9a9a9e" stroke-width="1.1" stroke-linecap="round" stroke-linejoin="round"/></svg>
<div class="abs" style="left:1243.3px;top:630.5px;width:65.4px;height:17.5px;border:1px solid #e4e4e7;border-radius:3px;background:#fff"></div>
<span style="left:1250px">15 条/页</span>
<svg class="abs" style="left:1293px;top:636px" width="8" height="7" viewBox="0 0 8 7"><path d="M1.2 2.1 L4 4.8 L6.8 2.1" fill="none" stroke="#c8c8cc" stroke-width="1.1" stroke-linecap="round" stroke-linejoin="round"/></svg>
<span style="left:1315px">跳至</span>
<div class="abs" style="left:1341px;top:630.5px;width:32px;height:17.5px;border:1px solid #e4e4e7;border-radius:3px;background:#fff"></div>
<span style="left:1379px">页</span>
</div>
</body>
</html>
